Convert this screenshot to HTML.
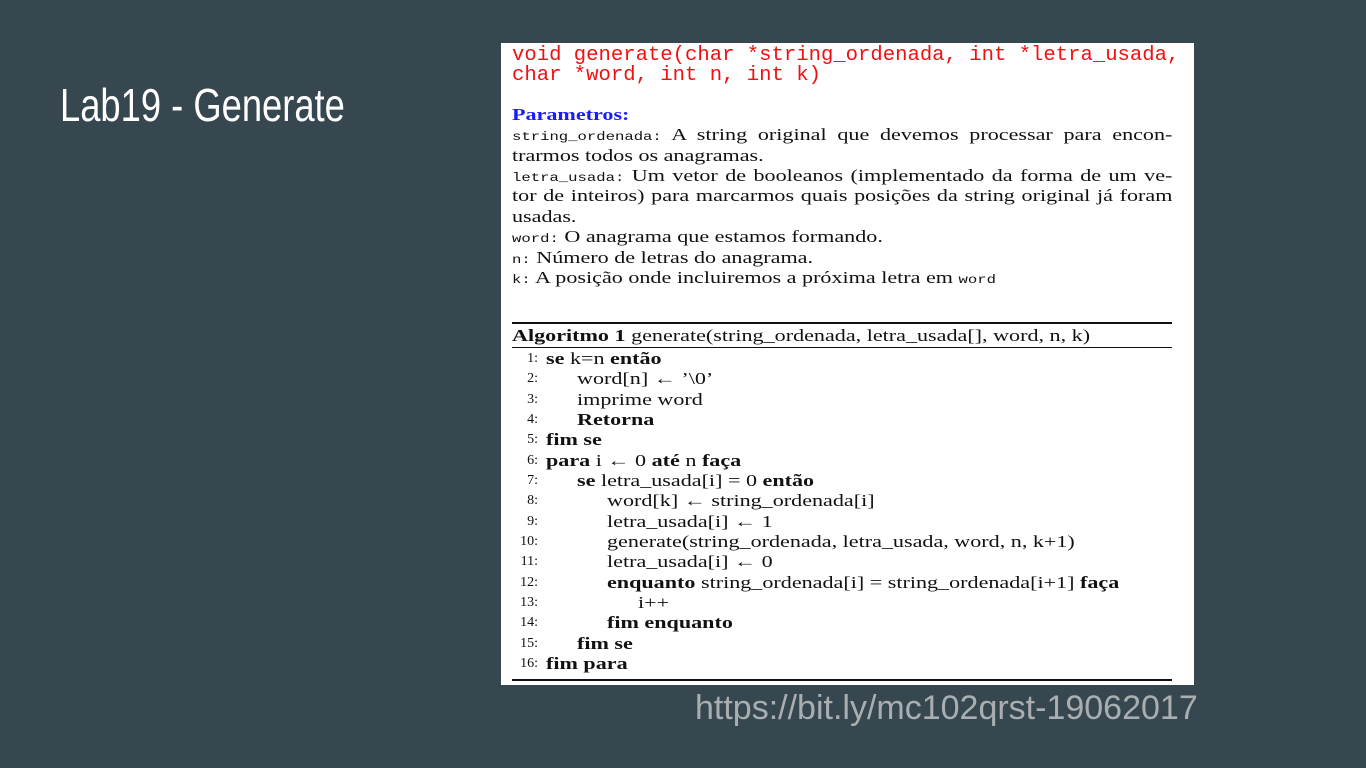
<!DOCTYPE html>
<html><head><meta charset="utf-8"><style>
body{margin:0;width:1366px;height:768px;background:#37474f;position:relative;overflow:hidden;font-family:"Liberation Serif",serif}
.t{position:absolute;left:60px;top:78px;color:#fff;font-family:"Liberation Sans",sans-serif;font-size:46px;transform:scaleX(0.79);transform-origin:left top;white-space:nowrap}
.box{position:absolute;left:501px;top:43px;width:693px;height:642px;background:#fff}
.l{position:absolute;white-space:nowrap;line-height:20px;font-size:17px;color:#111;transform:scaleX(1.3);transform-origin:left top}
.j{width:508px;text-align:justify;text-align-last:justify;white-space:normal}
.m{font-family:"Liberation Mono",monospace;font-size:12px}
.red{position:absolute;white-space:nowrap;line-height:20px;color:#f01010;font-family:"Liberation Mono",monospace;font-size:20.6px}
.n{position:absolute;width:26px;text-align:right;font-size:14px;line-height:20px;color:#111;top:1px}
.rule{position:absolute;left:512px;width:660px;background:#111}
.url{position:absolute;left:695px;top:689px;color:#a9aeb1;font-family:"Liberation Sans",sans-serif;font-size:34px;white-space:nowrap}
</style></head><body>
<div class="t">Lab19 - Generate</div>
<div class="box"></div>
<div class="red" style="left:512px;top:46px">void generate(char *string_ordenada, int *letra_usada,</div>
<div class="red" style="left:512px;top:66px">char *word, int n, int k)</div>
<div class="l" style="left:512px;top:105px;color:#1a1aff;font-weight:bold">Parametros:</div>
<div class="l j" style="left:512px;top:125px"><span class="m">string_ordenada:</span> A string original que devemos processar para encon-</div>
<div class="l" style="left:512px;top:146px">trarmos todos os anagramas.</div>
<div class="l j" style="left:512px;top:166px"><span class="m">letra_usada:</span> Um vetor de booleanos (implementado da forma de um ve-</div>
<div class="l j" style="left:512px;top:186px">tor de inteiros) para marcarmos quais posições da string original já foram</div>
<div class="l" style="left:512px;top:207px">usadas.</div>
<div class="l" style="left:512px;top:227px"><span class="m">word:</span> O anagrama que estamos formando.</div>
<div class="l" style="left:512px;top:248px"><span class="m">n:</span> Número de letras do anagrama.</div>
<div class="l" style="left:512px;top:268px"><span class="m">k:</span> A posição onde incluiremos a próxima letra em <span class="m">word</span></div>
<div class="rule" style="top:322px;height:2px"></div>
<div class="l" style="left:512px;top:326px"><b>Algoritmo 1</b> generate(string_ordenada, letra_usada[], word, n, k)</div>
<div class="rule" style="top:347px;height:1px"></div>
<div class="n" style="left:512px;top:349px">1:</div><div class="l" style="left:546px;top:349px"><b>se</b> k=n <b>então</b></div>
<div class="n" style="left:512px;top:369px">2:</div><div class="l" style="left:577px;top:369px">word[n] ← ’\0’</div>
<div class="n" style="left:512px;top:390px">3:</div><div class="l" style="left:577px;top:390px">imprime word</div>
<div class="n" style="left:512px;top:410px">4:</div><div class="l" style="left:577px;top:410px"><b>Retorna</b></div>
<div class="n" style="left:512px;top:430px">5:</div><div class="l" style="left:546px;top:430px"><b>fim se</b></div>
<div class="n" style="left:512px;top:451px">6:</div><div class="l" style="left:546px;top:451px"><b>para</b> i ← 0 <b>até</b> n <b>faça</b></div>
<div class="n" style="left:512px;top:471px">7:</div><div class="l" style="left:577px;top:471px"><b>se</b> letra_usada[i] = 0 <b>então</b></div>
<div class="n" style="left:512px;top:491px">8:</div><div class="l" style="left:607px;top:491px">word[k] ← string_ordenada[i]</div>
<div class="n" style="left:512px;top:512px">9:</div><div class="l" style="left:607px;top:512px">letra_usada[i] ← 1</div>
<div class="n" style="left:512px;top:532px">10:</div><div class="l" style="left:607px;top:532px">generate(string_ordenada, letra_usada, word, n, k+1)</div>
<div class="n" style="left:512px;top:552px">11:</div><div class="l" style="left:607px;top:552px">letra_usada[i] ← 0</div>
<div class="n" style="left:512px;top:573px">12:</div><div class="l" style="left:607px;top:573px"><b>enquanto</b> string_ordenada[i] = string_ordenada[i+1] <b>faça</b></div>
<div class="n" style="left:512px;top:593px">13:</div><div class="l" style="left:638px;top:593px">i++</div>
<div class="n" style="left:512px;top:613px">14:</div><div class="l" style="left:607px;top:613px"><b>fim enquanto</b></div>
<div class="n" style="left:512px;top:634px">15:</div><div class="l" style="left:577px;top:634px"><b>fim se</b></div>
<div class="n" style="left:512px;top:654px">16:</div><div class="l" style="left:546px;top:654px"><b>fim para</b></div>
<div class="rule" style="top:679px;height:2px"></div>
<div class="url">https://bit.ly/mc102qrst-19062017</div>
</body></html>
